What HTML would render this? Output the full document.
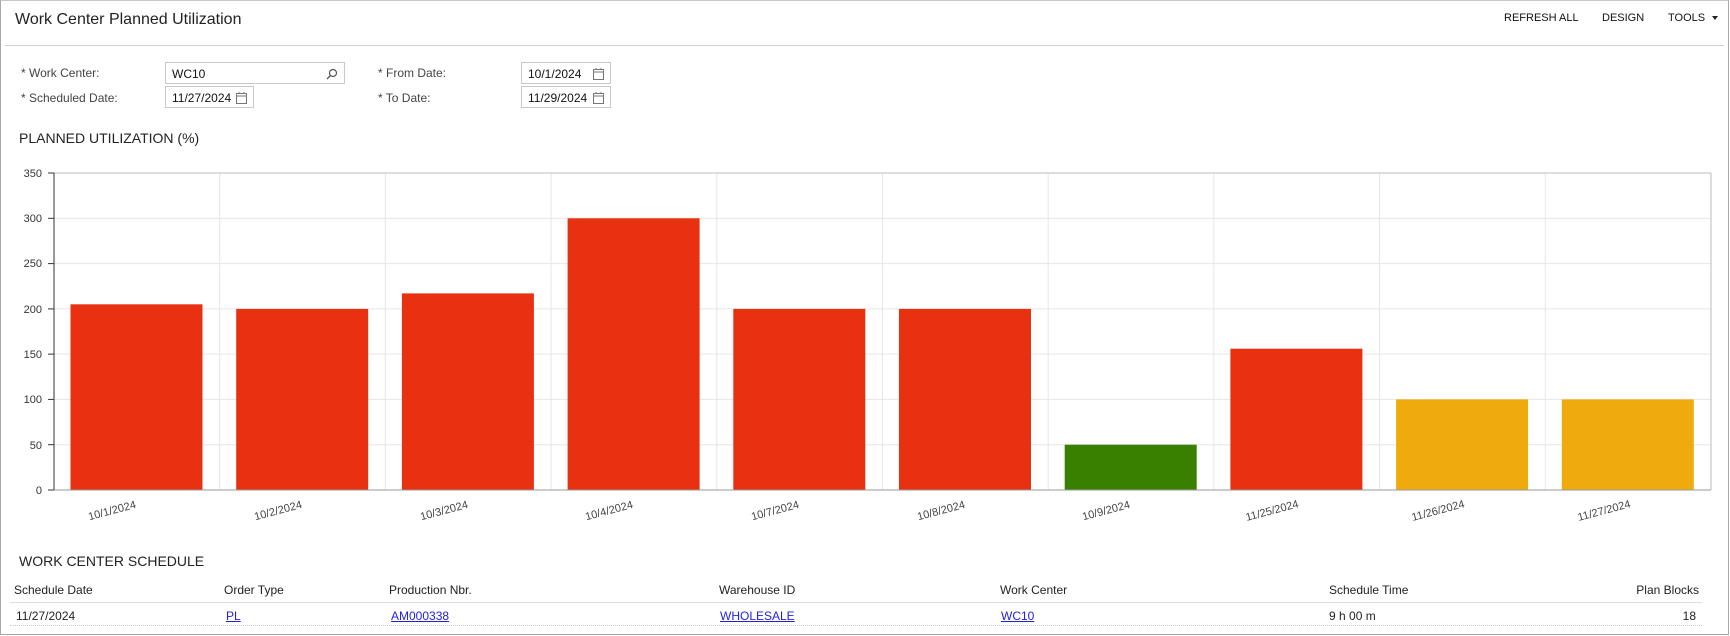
<!DOCTYPE html>
<html><head><meta charset="utf-8"><style>
*{margin:0;padding:0;box-sizing:border-box}
body{width:1730px;height:636px;background:#fff;font-family:"Liberation Sans",Arial,sans-serif;color:#222;position:relative;overflow:hidden}
.frame{position:absolute;left:0;top:0;width:1729px;height:635px;border:1px solid #a8a8a8;border-top:1px solid #c8c8c8}
.abs{position:absolute;white-space:nowrap}
.hdr{left:5px;right:6px;top:45px;height:1px;background:#d0d0d0;position:absolute}
.title{left:15px;top:11px;font-size:16px;color:#222}
.tb{top:12px;font-size:11px;color:#111;font-weight:500}
.lbl{font-size:12px;color:#444}
.inp{position:absolute;border:1px solid #c8c8c8;height:22px;font-size:12px;color:#111;padding:4px 6px;background:#fff}
.sec{font-size:14px;color:#222}
.th{top:583px;font-size:12px;color:#222}
.td{top:609px;font-size:12px;color:#222}
a{color:#2222dd;text-decoration:underline}
</style></head><body>
<div class="frame"></div>
<div class="abs title">Work Center Planned Utilization</div>
<div class="abs tb" style="left:1504px">REFRESH ALL</div>
<div class="abs tb" style="left:1602px">DESIGN</div>
<div class="abs tb" style="left:1668px">TOOLS</div>
<div class="abs" style="left:1712px;top:16px;width:0;height:0;border-left:3px solid transparent;border-right:3px solid transparent;border-top:4px solid #222"></div>
<div class="hdr"></div>

<div class="abs lbl" style="left:21px;top:66px">* Work Center:</div>
<div class="abs lbl" style="left:21px;top:91px">* Scheduled Date:</div>
<div class="abs lbl" style="left:378px;top:66px">* From Date:</div>
<div class="abs lbl" style="left:378px;top:91px">* To Date:</div>
<div class="inp" style="left:165px;top:62px;width:180px">WC10
<svg style="position:absolute;right:6px;top:5px" width="12" height="12" viewBox="0 0 12 12"><circle cx="7" cy="5" r="3.5" fill="none" stroke="#555" stroke-width="1.2"/><line x1="4.5" y1="7.5" x2="1" y2="11" stroke="#555" stroke-width="1.3"/></svg></div>
<div class="inp" style="left:165px;top:86px;width:89px">11/27/2024
<svg style="position:absolute;right:6px;top:5px" width="11" height="12" viewBox="0 0 11 12"><rect x="0.5" y="1.5" width="10" height="10" fill="none" stroke="#777"/><line x1="0.5" y1="4" x2="10.5" y2="4" stroke="#777"/><line x1="3" y1="0" x2="3" y2="2" stroke="#777"/><line x1="8" y1="0" x2="8" y2="2" stroke="#777"/></svg></div>
<div class="inp" style="left:521px;top:62px;width:90px">10/1/2024
<svg style="position:absolute;right:6px;top:5px" width="11" height="12" viewBox="0 0 11 12"><rect x="0.5" y="1.5" width="10" height="10" fill="none" stroke="#777"/><line x1="0.5" y1="4" x2="10.5" y2="4" stroke="#777"/><line x1="3" y1="0" x2="3" y2="2" stroke="#777"/><line x1="8" y1="0" x2="8" y2="2" stroke="#777"/></svg></div>
<div class="inp" style="left:521px;top:86px;width:90px">11/29/2024
<svg style="position:absolute;right:6px;top:5px" width="11" height="12" viewBox="0 0 11 12"><rect x="0.5" y="1.5" width="10" height="10" fill="none" stroke="#777"/><line x1="0.5" y1="4" x2="10.5" y2="4" stroke="#777"/><line x1="3" y1="0" x2="3" y2="2" stroke="#777"/><line x1="8" y1="0" x2="8" y2="2" stroke="#777"/></svg></div>

<div class="abs sec" style="left:19px;top:130px">PLANNED UTILIZATION (%)</div>

<svg class="abs" style="left:0;top:0" width="1730" height="560" font-family="Liberation Sans, Arial, sans-serif">
<g stroke="#e6e6e6" stroke-width="1">
<line x1="54" y1="218.3" x2="1711" y2="218.3"/><line x1="54" y1="263.6" x2="1711" y2="263.6"/><line x1="54" y1="308.9" x2="1711" y2="308.9"/><line x1="54" y1="354.1" x2="1711" y2="354.1"/><line x1="54" y1="399.4" x2="1711" y2="399.4"/><line x1="54" y1="444.7" x2="1711" y2="444.7"/>
<line x1="219.7" y1="173" x2="219.7" y2="490"/><line x1="385.4" y1="173" x2="385.4" y2="490"/><line x1="551.1" y1="173" x2="551.1" y2="490"/><line x1="716.8" y1="173" x2="716.8" y2="490"/><line x1="882.5" y1="173" x2="882.5" y2="490"/><line x1="1048.2" y1="173" x2="1048.2" y2="490"/><line x1="1213.9" y1="173" x2="1213.9" y2="490"/><line x1="1379.6" y1="173" x2="1379.6" y2="490"/><line x1="1545.3" y1="173" x2="1545.3" y2="490"/>
</g>
<line x1="54" y1="173" x2="1711" y2="173" stroke="#bbb"/>
<line x1="1711" y1="173" x2="1711" y2="490" stroke="#bbb"/>
<g>
<rect x="70.5" y="304.3" width="132" height="185.7" fill="#e73111"/>
<rect x="236.2" y="308.9" width="132" height="181.1" fill="#e73111"/>
<rect x="401.9" y="293.4" width="132" height="196.6" fill="#e73111"/>
<rect x="567.6" y="218.3" width="132" height="271.7" fill="#e73111"/>
<rect x="733.3" y="308.9" width="132" height="181.1" fill="#e73111"/>
<rect x="899" y="308.9" width="132" height="181.1" fill="#e73111"/>
<rect x="1064.7" y="444.7" width="132" height="45.3" fill="#3a8000"/>
<rect x="1230.4" y="348.7" width="132" height="141.3" fill="#e73111"/>
<rect x="1396.1" y="399.4" width="132" height="90.6" fill="#efab0e"/>
<rect x="1561.8" y="399.4" width="132" height="90.6" fill="#efab0e"/>
</g>
<line x1="54" y1="173" x2="54" y2="490" stroke="#333"/>
<line x1="54" y1="490" x2="1711" y2="490" stroke="#999"/>
<g stroke="#333"><line x1="48" y1="173" x2="54" y2="173"/><line x1="48" y1="218.3" x2="54" y2="218.3"/><line x1="48" y1="263.6" x2="54" y2="263.6"/><line x1="48" y1="308.9" x2="54" y2="308.9"/><line x1="48" y1="354.1" x2="54" y2="354.1"/><line x1="48" y1="399.4" x2="54" y2="399.4"/><line x1="48" y1="444.7" x2="54" y2="444.7"/><line x1="48" y1="490" x2="54" y2="490"/></g>
<g font-size="11" fill="#333" text-anchor="end">
<text x="42" y="177">350</text><text x="42" y="222">300</text><text x="42" y="267">250</text><text x="42" y="313">200</text><text x="42" y="358">150</text><text x="42" y="403">100</text><text x="42" y="449">50</text><text x="42" y="494">0</text>
</g>
<g font-size="11" fill="#444" text-anchor="middle">
<text transform="translate(113,514) rotate(-15)">10/1/2024</text>
<text transform="translate(279,514) rotate(-15)">10/2/2024</text>
<text transform="translate(445,514) rotate(-15)">10/3/2024</text>
<text transform="translate(610,514) rotate(-15)">10/4/2024</text>
<text transform="translate(776,514) rotate(-15)">10/7/2024</text>
<text transform="translate(942,514) rotate(-15)">10/8/2024</text>
<text transform="translate(1107,514) rotate(-15)">10/9/2024</text>
<text transform="translate(1273,514) rotate(-15)">11/25/2024</text>
<text transform="translate(1439,514) rotate(-15)">11/26/2024</text>
<text transform="translate(1605,514) rotate(-15)">11/27/2024</text>
</g>
</svg>

<div class="abs sec" style="left:19px;top:553px">WORK CENTER SCHEDULE</div>
<div class="abs th" style="left:14px">Schedule Date</div>
<div class="abs th" style="left:224px">Order Type</div>
<div class="abs th" style="left:389px">Production Nbr.</div>
<div class="abs th" style="left:719px">Warehouse ID</div>
<div class="abs th" style="left:1000px">Work Center</div>
<div class="abs th" style="left:1329px">Schedule Time</div>
<div class="abs th" style="right:31px">Plan Blocks</div>
<div class="abs" style="left:10px;width:1692px;top:602px;height:1px;background:#ddd"></div>
<div class="abs td" style="left:16px">11/27/2024</div>
<div class="abs td" style="left:226px"><a>PL</a></div>
<div class="abs td" style="left:391px"><a>AM000338</a></div>
<div class="abs td" style="left:720px"><a>WHOLESALE</a></div>
<div class="abs td" style="left:1001px"><a>WC10</a></div>
<div class="abs td" style="left:1329px">9 h 00 m</div>
<div class="abs td" style="right:34px">18</div>
<div class="abs" style="left:10px;width:1692px;top:625px;height:0;border-top:1px dotted #ccc"></div>
</body></html>
